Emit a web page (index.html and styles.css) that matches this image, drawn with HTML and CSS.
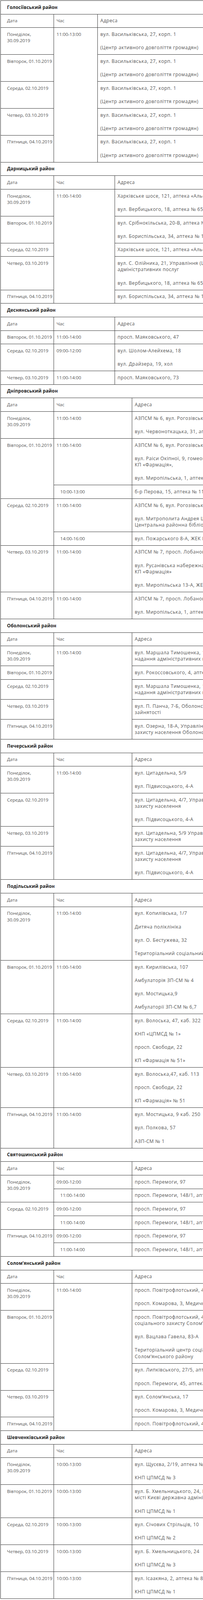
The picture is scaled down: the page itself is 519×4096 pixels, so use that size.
FILE: index.html
```html
<!DOCTYPE html>
<html lang="uk">
<head>
<meta charset="utf-8">
<title>Графік</title>
<link rel="stylesheet" href="styles.css">
</head>
<body>
<div class="schedule">

<table class="district t1">
<colgroup><col class="c-date"><col class="c-time"><col class="c-addr"></colgroup>
<tr class="title"><th colspan="3">Голосіївський район</th></tr>
<tr><td>Дата</td><td>Час</td><td>Адреса</td></tr>
<tr><td>Понеділок,<br>30.09.2019</td><td rowspan="5">11:00-13:00</td><td><p>вул. Васильківська, 27, корп. 1</p><p>(Центр активного довголіття громадян)</p></td></tr>
<tr><td>Вівторок, 01.10.2019</td><td><p>вул. Васильківська, 27, корп. 1</p><p>(Центр активного довголіття громадян)</p></td></tr>
<tr><td>Середа, 02.10.2019</td><td><p>вул. Васильківська, 27, корп. 1</p><p>(Центр активного довголіття громадян)</p></td></tr>
<tr><td>Четвер, 03.10.2019</td><td><p>вул. Васильківська, 27, корп. 1</p><p>(Центр активного довголіття громадян)</p></td></tr>
<tr><td>П’ятниця, 04.10.2019</td><td><p>вул. Васильківська, 27, корп. 1</p><p>(Центр активного довголіття громадян)</p></td></tr>
</table>

<table class="district t2">
<colgroup><col class="c-date"><col class="c-time"><col class="c-addr"></colgroup>
<tr class="title"><th colspan="3">Дарницький район</th></tr>
<tr><td>Дата</td><td>Час</td><td>Адреса</td></tr>
<tr><td>Понеділок,<br>30.09.2019</td><td rowspan="5">11:00-14:00</td><td><p>Харківське шосе, 121, аптека «Альфа-Фарм»</p><p>вул. Вербицького, 18, аптека № 65 КП «Фармація»</p></td></tr>
<tr><td>Вівторок, 01.10.2019</td><td><p>вул. Срібнокільська, 20-В, аптека № 54 КП «Фармація»</p><p>вул. Бориспільська, 34, аптека № 111 КП «Фармація»</p></td></tr>
<tr><td>Середа, 02.10.2019</td><td><p>Харківське шосе, 121, аптека «Альфа-Фарм»</p></td></tr>
<tr><td>Четвер, 03.10.2019</td><td><p>вул. С. Олійника, 21, Управління (Центр) надання<br>адміністративних послуг</p><p>вул. Вербицького, 18, аптека № 65 КП «Фармація»</p></td></tr>
<tr><td>П’ятниця, 04.10.2019</td><td><p>вул. Бориспільська, 34, аптека № 111 КП «Фармація»</p></td></tr>
</table>

<table class="district t2">
<colgroup><col class="c-date"><col class="c-time"><col class="c-addr"></colgroup>
<tr class="title"><th colspan="3">Деснянський район</th></tr>
<tr><td>Дата</td><td>Час</td><td>Адреса</td></tr>
<tr><td>Вівторок, 01.10.2019</td><td>11:00-14:00</td><td><p>просп. Маяковського, 47</p></td></tr>
<tr><td>Середа, 02.10.2019</td><td>09:00-12:00</td><td><p>вул. Шолом-Алейхема, 18</p><p>вул. Драйзера, 19, хол</p></td></tr>
<tr><td>Четвер, 03.10.2019</td><td>11:00-14:00</td><td><p>просп. Маяковського, 73</p></td></tr>
</table>

<table class="district t3">
<colgroup><col class="c-date"><col class="c-time"><col class="c-addr"></colgroup>
<tr class="title"><th colspan="3">Дніпровський район</th></tr>
<tr><td>Дата</td><td>Час</td><td>Адреса</td></tr>
<tr><td>Понеділок,<br>30.09.2019</td><td>11:00-14:00</td><td><p>АЗПСМ № 6, вул. Рогозівська, 6</p><p>вул. Червоноткацька, 31, аптека КП «Фармація»</p></td></tr>
<tr><td rowspan="2">Вівторок, 01.10.2019</td><td>11:00-14:00</td><td><p>АЗПСМ № 6, вул. Рогозівська, 6</p><p>вул. Раіси Окіпної, 9, гомеопатична аптека<br>КП «Фармація»,</p><p>вул. Миропільська, 1, аптека № 4</p></td></tr>
<tr><td>10:00-13:00</td><td><p>б-р Перова, 15, аптека № 112</p></td></tr>
<tr><td rowspan="2">Середа, 02.10.2019</td><td>11:00-14:00</td><td><p>АЗПСМ № 6, вул. Рогозівська, 6</p><p>вул. Митрополита Андрея Шептицького, 4-А,<br>Центральна районна бібліотека</p></td></tr>
<tr><td>14:00-16:00</td><td><p>вул. Пожарського 8-А, ЖЕК № 203</p></td></tr>
<tr><td>Четвер, 03.10.2019</td><td>11:00-14:00</td><td><p>АЗПСМ № 7, просп. Лобановського, 4</p><p>вул. Русанівська набережна, 10, аптека<br>КП «Фармація»</p><p>вул. Миропільська 13-А, ЖЕК № 107</p></td></tr>
<tr><td>П’ятниця, 04.10.2019</td><td>11:00-14:00</td><td><p>АЗПСМ № 7, просп. Лобановського, 4</p><p>вул. Миропільська, 1, аптека № 4</p></td></tr>
</table>

<table class="district t3">
<colgroup><col class="c-date"><col class="c-time"><col class="c-addr"></colgroup>
<tr class="title"><th colspan="3">Оболонський район</th></tr>
<tr><td>Дата</td><td>Час</td><td>Адреса</td></tr>
<tr><td>Понеділок,<br>30.09.2019</td><td rowspan="5">11:00-14:00</td><td><p>вул. Маршала Тимошенка, 16, Центр<br>надання адміністративних послуг</p></td></tr>
<tr><td>Вівторок, 01.10.2019</td><td><p>вул. Рокоссовського, 4, аптека № 8</p></td></tr>
<tr><td>Середа, 02.10.2019</td><td><p>вул. Маршала Тимошенка, 16, Центр<br>надання адміністративних послуг</p></td></tr>
<tr><td>Четвер, 03.10.2019</td><td><p>вул. П. Панча, 7-Б, Оболонський районний центр<br>зайнятості</p></td></tr>
<tr><td>П’ятниця, 04.10.2019</td><td><p>вул. Озерна, 18-А, Управління соціального<br>захисту населення Оболонського району</p></td></tr>
</table>

<table class="district t3">
<colgroup><col class="c-date"><col class="c-time"><col class="c-addr"></colgroup>
<tr class="title"><th colspan="3">Печерський район</th></tr>
<tr><td>Дата</td><td>Час</td><td>Адреса</td></tr>
<tr><td>Понеділок,<br>30.09.2019</td><td rowspan="4">11:00-14:00</td><td><p>вул. Цитадельна, 5/9</p><p>вул. Підвисоцького, 4-А</p></td></tr>
<tr><td>Середа, 02.10.2019</td><td><p>вул. Цитадельна, 4/7, Управління соціального<br>захисту населення</p><p>вул. Підвисоцького, 4-А</p></td></tr>
<tr><td>Четвер, 03.10.2019</td><td><p>вул. Цитадельна, 5/9 Управління соціального<br>захисту населення</p></td></tr>
<tr><td>П’ятниця, 04.10.2019</td><td><p>вул. Цитадельна, 4/7, Управління соціального<br>захисту населення</p><p>вул. Підвисоцького, 4-А</p></td></tr>
</table>

<table class="district t3">
<colgroup><col class="c-date"><col class="c-time"><col class="c-addr"></colgroup>
<tr class="title"><th colspan="3">Подільський район</th></tr>
<tr><td>Дата</td><td>Час</td><td>Адреса</td></tr>
<tr><td>Понеділок,<br>30.09.2019</td><td>11:00-14:00</td><td><p>вул. Копилівська, 1/7</p><p>Дитяча поліклініка</p><p>вул. О. Бестужева, 32</p><p>Територіальний соціальний центр</p></td></tr>
<tr><td>Вівторок, 01.10.2019</td><td>11:00-14:00</td><td><p>вул. Кирилівська, 107</p><p>Амбулаторія ЗП-СМ № 4</p><p>вул. Мостицька,9</p><p>Амбулаторії ЗП-СМ № 6,7</p></td></tr>
<tr><td>Середа, 02.10.2019</td><td>11:00-14:00</td><td><p>вул. Волоська, 47, каб. 322</p><p>КНП «ЦПМСД № 1»</p><p>просп. Свободи, 22</p><p>КП «Фармація № 51»</p></td></tr>
<tr><td>Четвер, 03.10.2019</td><td>11:00-14:00</td><td><p>вул. Волоська,47, каб. 113</p><p>просп. Свободи, 22</p><p>КП «Фармація» № 51</p></td></tr>
<tr><td>П’ятниця, 04.10.2019</td><td>11:00-14:00</td><td><p>вул. Мостицька, 9 каб. 250</p><p>вул. Полкова, 57</p><p>АЗП-СМ № 1</p></td></tr>
</table>

<table class="district t3">
<colgroup><col class="c-date"><col class="c-time"><col class="c-addr"></colgroup>
<tr class="title"><th colspan="3">Святошинський район</th></tr>
<tr><td>Дата</td><td>Час</td><td>Адреса</td></tr>
<tr><td rowspan="2">Понеділок,<br>30.09.2019</td><td>09:00-12:00</td><td><p>просп. Перемоги, 97</p></td></tr>
<tr><td>11:00-14:00</td><td><p>просп. Перемоги, 148/1, аптека № 7</p></td></tr>
<tr><td rowspan="2">Середа, 02.10.2019</td><td>09:00-12:00</td><td><p>просп. Перемоги, 97</p></td></tr>
<tr><td>11:00-14:00</td><td><p>просп. Перемоги, 148/1, аптека № 7</p></td></tr>
<tr><td rowspan="2">П’ятниця, 04.10.2019</td><td>09:00-12:00</td><td><p>просп. Перемоги, 97</p></td></tr>
<tr><td>11:00-14:00</td><td><p>просп. Перемоги, 148/1, аптека № 7</p></td></tr>
</table>

<table class="district t3">
<colgroup><col class="c-date"><col class="c-time"><col class="c-addr"></colgroup>
<tr class="title"><th colspan="3">Солом’янський район</th></tr>
<tr><td>Дата</td><td>Час</td><td>Адреса</td></tr>
<tr><td>Понеділок,<br>30.09.2019</td><td rowspan="5">11:00-14:00</td><td><p>просп. Повітрофлотський, 41</p><p>просп. Комарова, 3, Медичний центр</p></td></tr>
<tr><td>Вівторок, 01.10.2019</td><td><p>просп. Повітрофлотський, 41, Управління праці та<br>соціального захисту Солом’янського району</p><p>вул. Вацлава Гавела, 83-А</p><p>Територіальний центр соціального обслуговування<br>Солом’янського району</p></td></tr>
<tr><td>Середа, 02.10.2019</td><td><p>вул. Липківського, 27/5, аптека № 3</p><p>просп. Перемоги, 45, аптека № 10</p></td></tr>
<tr><td>Четвер, 03.10.2019</td><td><p>вул. Солом’янська, 17</p><p>просп. Комарова, 3, Медичний центр</p></td></tr>
<tr><td>П’ятниця, 04.10.2019</td><td><p>просп. Повітрофлотський, 41</p></td></tr>
</table>

<table class="district t3">
<colgroup><col class="c-date"><col class="c-time"><col class="c-addr"></colgroup>
<tr class="title"><th colspan="3">Шевченківський район</th></tr>
<tr><td>Дата</td><td>Час</td><td>Адреса</td></tr>
<tr><td>Понеділок,<br>30.09.2019</td><td>10:00-13:00</td><td><p>вул. Щусєва, 2/19, аптека № 24</p><p>КНП ЦПМСД № 3</p></td></tr>
<tr><td>Вівторок, 01.10.2019</td><td>10:00-13:00</td><td><p>вул. Б. Хмельницького, 24, Шевченківська районна в<br>місті Києві державна адміністрація</p><p>КНП ЦПМСД № 1</p></td></tr>
<tr><td>Середа, 02.10.2019</td><td>10:00-13:00</td><td><p>вул. Січових Стрільців, 10</p><p>КНП ЦПМСД № 2</p></td></tr>
<tr><td>Четвер, 03.10.2019</td><td>10:00-13:00</td><td><p>вул. Б. Хмельницького, 24</p><p>КНП ЦПМСД № 3</p></td></tr>
<tr><td>П’ятниця, 04.10.2019</td><td>10:00-13:00</td><td><p>вул. Ісаакяна, 2, аптека № 8</p><p>КНП ЦПМСД № 1</p></td></tr>
</table>

</div>
</body>
</html>
```

FILE: styles.css
```css
* {
  box-sizing: border-box;
}

html,
body {
  margin: 0;
  padding: 0;
  background: #ffffff;
}

body {
  font-family: "Open Sans", "DejaVu Sans", sans-serif;
  font-size: 11.6px;
  color: #555555;
}

.schedule {
  width: 519px;
  overflow: hidden;
  padding: 1px 0 0 1px;
}

.district {
  border-collapse: collapse;
  table-layout: fixed;
}

.district + .district {
  margin-top: -1px;
}

.district th,
.district td {
  border: 1px solid #363636;
  padding: 8.7px 6.5px;
  vertical-align: top;
  text-align: left;
  font-weight: 400;
  line-height: 16.3px;
  white-space: nowrap;
}

.district tr > :first-child {
  padding-left: 16.1px;
}

.district td:last-child {
  font-size: 12px;
  letter-spacing: 0.55px;
}

.district .title th {
  font-weight: 700;
  color: #222222;
  letter-spacing: 0.15px;
}

.district p {
  margin: 0;
}

.district p + p {
  margin-top: 17.9px;
}

.c-date {
  width: 136px;
}

.c-addr {
  width: 420px;
}

.t1 {
  width: 668px;
}

.t1 .c-time {
  width: 112px;
}

.t2 {
  width: 712px;
}

.t2 .c-time {
  width: 156px;
}

.t3 {
  width: 756px;
}

.t3 .c-time {
  width: 200px;
}
```
